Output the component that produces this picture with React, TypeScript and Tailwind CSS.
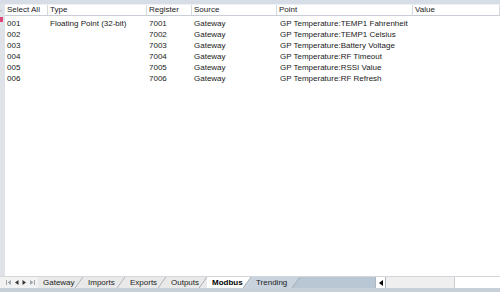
import React from 'react';

const rows = [
  { id: '001', type: 'Floating Point (32-bit)', reg: '7001', src: 'Gateway', point: 'GP Temperature:TEMP1 Fahrenheit' },
  { id: '002', type: '', reg: '7002', src: 'Gateway', point: 'GP Temperature:TEMP1 Celsius' },
  { id: '003', type: '', reg: '7003', src: 'Gateway', point: 'GP Temperature:Battery Voltage' },
  { id: '004', type: '', reg: '7004', src: 'Gateway', point: 'GP Temperature:RF Timeout' },
  { id: '005', type: '', reg: '7005', src: 'Gateway', point: 'GP Temperature:RSSI Value' },
  { id: '006', type: '', reg: '7006', src: 'Gateway', point: 'GP Temperature:RF Refresh' },
];

const cols = 'grid grid-cols-[43px_99px_45px_85px_136px_1fr]';

const tabs = [
  { name: 'Gateway', w: 'w-[45px]' },
  { name: 'Imports', w: 'w-[42px]' },
  { name: 'Exports', w: 'w-[41px]' },
  { name: 'Outputs', w: 'w-[41px]' },
];

function Slant({ left, right }: { left: string; right: string }) {
  return (
    <svg width="8" height="11" viewBox="0 0 8 11" className="shrink-0 block">
      <rect width="8" height="11" fill={right} />
      <path d="M0 0 L8 0 L0 11 Z" fill={left} />
      <path d="M0 11 L8 0" stroke="#9aa4af" strokeWidth="0.8" />
    </svg>
  );
}

function Nav() {
  return (
    <div className="w-[38px] flex items-center pl-[5px] gap-[1px] bg-[#f2f2f2]">
      <svg width="7" height="7" viewBox="0 0 7 7"><path d="M1.5 1v5" stroke="#a0a8b0" /><path d="M6 1L2.5 3.5L6 6Z" fill="#a0a8b0" /></svg>
      <svg width="7" height="7" viewBox="0 0 7 7"><path d="M5.5 1L2 3.5L5.5 6Z" fill="#333" /></svg>
      <svg width="7" height="7" viewBox="0 0 7 7"><path d="M1.5 1L5 3.5L1.5 6Z" fill="#333" /></svg>
      <svg width="7" height="7" viewBox="0 0 7 7"><path d="M5.5 1v5" stroke="#a0a8b0" /><path d="M1 1L4.5 3.5L1 6Z" fill="#a0a8b0" /></svg>
    </div>
  );
}

export default function App() {
  return (
    <div className="w-[500px] h-[292px] bg-white flex flex-col overflow-hidden text-[8px] text-[#1a1a1a] font-['Liberation_Sans',Arial,sans-serif] leading-none whitespace-nowrap">
      <div className="h-[4px] bg-[#d6dde6] shrink-0" />
      <div className="flex flex-1 min-h-0">
        <div className="w-[5px] bg-[#dfe3e8] shrink-0 flex flex-col">
          <div className="h-[12px] flex items-center text-[6px] text-[#9aa3ad]">‹</div>
          <div className="h-[1px]" />
          <div className="h-[5px] w-[3px] bg-[#e0457a]" />
        </div>
        <div className="flex-1 flex flex-col">
          <div className={`${cols} h-[12px] border-b border-[#c9ced6] border-t border-t-[#eef0f3]`}>
            {['Select All', 'Type', 'Register', 'Source', 'Point', 'Value'].map((h) => (
              <div key={h} className="pl-[2px] flex items-center border-r border-[#d6dae0]">{h}</div>
            ))}
          </div>
          <div className="pt-[2px]">
            {rows.map((r) => (
              <div key={r.id} className={`${cols} h-[11px] items-center`}>
                <div className="pl-[2px]">{r.id}</div>
                <div className="pl-[2px]">{r.type}</div>
                <div className="pl-[2px]">{r.reg}</div>
                <div className="pl-[2px]">{r.src}</div>
                <div className="pl-[3px]">{r.point}</div>
                <div />
              </div>
            ))}
          </div>
        </div>
      </div>
      <div className="h-[12px] flex shrink-0 bg-[#e9e9e9] border-t border-[#d3d7dc]">
        <Nav />
        {tabs.map((t) => (
          <div key={t.name} className={`${t.w} flex`}>
            <div className="flex-1 pl-[5px] flex items-center text-[#222]">{t.name}</div>
            <Slant left="#e9e9e9" right="#e9e9e9" />
          </div>
        ))}
        <div className="w-[44px] flex bg-white">
          <div className="flex-1 pl-[5px] flex items-center font-bold text-black">Modbus</div>
          <Slant left="#ffffff" right="#c9d3dd" />
        </div>
        <div className="w-[49px] flex bg-[#c9d3dd]">
          <div className="flex-1 pl-[5px] flex items-center text-[#222]">Trending</div>
          <Slant left="#c9d3dd" right="#b9c6d3" />
        </div>
        <div className="flex-1 bg-[#b9c6d3] flex">
          <div className="w-[75px]" />
          <div className="w-[11px] bg-white border-x border-[#b0b6bd] flex items-center justify-center">
            <svg width="4" height="6" viewBox="0 0 4 6"><path d="M4 0L0 3L4 6Z" fill="#000" /></svg>
          </div>
          <div className="w-[69px] bg-[#efefef] border-r border-[#c9cdd2]" />
          <div className="flex-1 bg-white" />
        </div>
      </div>
      <div className="h-[4px] bg-[#c7cfd9] shrink-0" />
    </div>
  );
}
